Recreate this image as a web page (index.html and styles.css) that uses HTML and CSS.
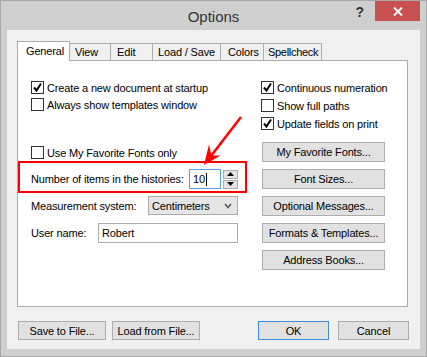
FILE: index.html
```html
<!DOCTYPE html>
<html lang="en">

<head>
    <meta charset="UTF-8">
    <meta name="viewport" content="width=device-width, initial-scale=1.0">
    <title>Options</title>
    <link rel="stylesheet" href="styles.css">
</head>

<body>
    <div class="window">
        <div class="titlebar">
            <span class="title">Options</span>
            <div class="controls">
                <span class="help">?</span>
                <span class="close">
                    <svg width="10" height="9" viewBox="0 0 10 9">
                        <path d="M1 0.5 L9 8.5 M9 0.5 L1 8.5" stroke="#fff" stroke-width="2" />
                    </svg>
                </span>
            </div>
        </div>

        <div class="client">
            <div class="tabs">
                <span class="tab active tab-general">General</span>
                <span class="tab tab-view">View</span>
                <span class="tab tab-edit">Edit</span>
                <span class="tab tab-load">Load / Save</span>
                <span class="tab tab-colors">Colors</span>
                <span class="tab tab-spell">Spellcheck</span>
            </div>

            <div class="panel">
                <div class="col left-col">
                    <label class="check">
                        <span class="box"><svg width="11" height="11" viewBox="0 0 11 11"><path d="M2 5.5 L4.5 8.5 L9 1.5" fill="none" stroke="#000" stroke-width="2" /></svg></span>
                        Create a new document at startup
                    </label>
                    <label class="check">
                        <span class="box"></span>
                        Always show templates window
                    </label>
                    <label class="check fav-row">
                        <span class="box"></span>
                        Use My Favorite Fonts only
                    </label>

                    <div class="field-row highlight">
                        <span>Number of items in the histories:</span>
                        <div class="spin-group">
                            <span class="num-input">10<span class="caret"></span></span>
                            <span class="spinner">
                                <span class="spin-btn"><svg width="7" height="4" viewBox="0 0 7 4"><path d="M0 4 L3.5 0 L7 4 Z" fill="#000" /></svg></span>
                                <span class="spin-btn"><svg width="7" height="4" viewBox="0 0 7 4"><path d="M0 0 L7 0 L3.5 4 Z" fill="#000" /></svg></span>
                            </span>
                        </div>
                    </div>

                    <div class="field-row measure-row">
                        <span>Measurement system:</span>
                        <span class="select">
                            Centimeters
                            <svg width="8" height="6" viewBox="0 0 8 6"><path d="M1 1 L4 4.5 L7 1" fill="none" stroke="#555" stroke-width="1.6" /></svg>
                        </span>
                    </div>

                    <div class="field-row user-row">
                        <span>User name:</span>
                        <span class="text-input">Robert</span>
                    </div>
                </div>

                <div class="col right-col">
                    <label class="check">
                        <span class="box"><svg width="11" height="11" viewBox="0 0 11 11"><path d="M2 5.5 L4.5 8.5 L9 1.5" fill="none" stroke="#000" stroke-width="2" /></svg></span>
                        Continuous numeration
                    </label>
                    <label class="check">
                        <span class="box"></span>
                        Show full paths
                    </label>
                    <label class="check">
                        <span class="box"><svg width="11" height="11" viewBox="0 0 11 11"><path d="M2 5.5 L4.5 8.5 L9 1.5" fill="none" stroke="#000" stroke-width="2" /></svg></span>
                        Update fields on print
                    </label>

                    <div class="side-buttons">
                        <button class="btn">My Favorite Fonts...</button>
                        <button class="btn">Font Sizes...</button>
                        <button class="btn">Optional Messages...</button>
                        <button class="btn">Formats &amp; Templates...</button>
                        <button class="btn">Address Books...</button>
                    </div>
                </div>

                <svg class="arrow" width="50" height="60" viewBox="0 0 50 60">
                    <path d="M43 4 L13 43" stroke="#f00" stroke-width="2.5" fill="none" />
                    <path d="M6 52 L22.5 42.5 L13.5 42.5 L11 31.5 Z" fill="#f00" />
                </svg>
            </div>

            <div class="footer">
                <div class="btn-group">
                    <button class="btn">Save to File...</button>
                    <button class="btn">Load from File...</button>
                </div>
                <div class="btn-group right">
                    <button class="btn default">OK</button>
                    <button class="btn">Cancel</button>
                </div>
            </div>
        </div>
    </div>
</body>

</html>
```

FILE: styles.css
```css
body {
    margin: 0;
    font-family: "Segoe UI", "Liberation Sans", Arial, sans-serif;
    font-size: 11px;
    letter-spacing: -0.15px;
    color: #000;
    background-color: #cdcdcd;
}

.window {
    width: 427px;
    height: 357px;
    box-sizing: border-box;
    border: 1px solid #a8a8a8;
    background-color: #cfcfcf;
    display: flex;
    flex-direction: column;
}

/* title bar */
.titlebar {
    height: 29px;
    position: relative;
    display: flex;
    align-items: center;
    justify-content: center;
}

.title {
    font-size: 15px;
    letter-spacing: 0;
    color: #333;
    margin-top: 1px;
}

.controls {
    position: absolute;
    top: 0;
    right: 6px;
    display: flex;
    align-items: flex-start;
}

.help {
    font-size: 14px;
    font-weight: bold;
    color: #333;
    margin: 3px 11px 0 0;
}

.close {
    width: 45px;
    height: 20px;
    background-color: #c75050;
    display: flex;
    align-items: center;
    justify-content: center;
}

/* client area */
.client {
    flex: 1;
    margin: 0 6px 7px;
    background-color: #f0f0f0;
    padding: 11px 10px 0;
    display: flex;
    flex-direction: column;
}

.tabs {
    display: flex;
    align-items: flex-end;
    height: 19px;
}

.tab {
    box-sizing: border-box;
    height: 17px;
    padding-left: 6px;
    margin-right: -1px;
    border: 1px solid #acacac;
    border-bottom: none;
    background-color: #f0f0f0;
    line-height: 16px;
    white-space: nowrap;
}

.tab.active {
    position: relative;
    z-index: 1;
    height: 20px;
    margin-bottom: -1px;
    padding-left: 8px;
    background-color: #fff;
    line-height: 18px;
}

.tab-general { width: 53px; }
.tab-view { width: 42px; padding-left: 5px; }
.tab-edit { width: 43px; }
.tab-load { width: 69px; padding-left: 5px; }
.tab-colors { width: 44px; padding-left: 7px; }
.tab-spell { width: 59px; padding-left: 4px; letter-spacing: -0.3px; }

.panel {
    position: relative;
    box-sizing: border-box;
    width: 391px;
    height: 247px;
    border: 1px solid #acacac;
    background-color: #fff;
    padding: 18px 0 0 13px;
    display: flex;
    gap: 23px;
}

.col {
    display: flex;
    flex-direction: column;
}

.left-col {
    width: 207px;
}

.check {
    display: flex;
    align-items: center;
    height: 17px;
    white-space: nowrap;
}

.right-col .check {
    margin-bottom: 1px;
}

.box {
    box-sizing: border-box;
    width: 13px;
    height: 13px;
    border: 1px solid #333;
    background-color: #fff;
    margin-right: 3px;
    display: flex;
    align-items: center;
    justify-content: center;
}

.fav-row {
    margin-top: 31px;
}

.field-row {
    display: flex;
    align-items: center;
    white-space: nowrap;
}

.highlight {
    box-sizing: border-box;
    height: 32px;
    margin: 0 -9px 0 -13px;
    padding: 4px 7px 0 11px;
    border: 2px solid #f00;
}

.spin-group {
    margin-left: auto;
    display: flex;
    align-items: center;
    gap: 2px;
}

.num-input {
    box-sizing: border-box;
    width: 32px;
    height: 20px;
    border: 1px solid #569de5;
    background-color: #fff;
    padding-left: 3px;
    display: flex;
    align-items: center;
}

.caret {
    display: inline-block;
    width: 1px;
    height: 13px;
    margin-left: 1px;
    background-color: #000;
}

.spinner {
    display: flex;
    flex-direction: column;
    gap: 1px;
}

.spin-btn {
    box-sizing: border-box;
    width: 15px;
    height: 9px;
    border: 1px solid #acacac;
    background-color: #e5e5e5;
    display: flex;
    align-items: center;
    justify-content: center;
}

.measure-row {
    margin-top: 3px;
}

.select {
    box-sizing: border-box;
    margin-left: auto;
    width: 90px;
    height: 19px;
    border: 1px solid #acacac;
    background-color: #e5e5e5;
    padding: 0 5px 0 3px;
    display: flex;
    align-items: center;
    justify-content: space-between;
}

.user-row {
    margin-top: 8px;
}

.text-input {
    box-sizing: border-box;
    margin-left: auto;
    width: 140px;
    height: 20px;
    border: 1px solid #acacac;
    background-color: #fff;
    padding-left: 3px;
    display: flex;
    align-items: center;
}

.side-buttons {
    margin-top: 9px;
    margin-left: 1px;
    display: flex;
    flex-direction: column;
    gap: 7px;
}

.btn {
    box-sizing: border-box;
    height: 20px;
    padding: 0;
    border: 1px solid #adadad;
    background-color: #e1e1e1;
    font-family: inherit;
    font-size: 11px;
    letter-spacing: inherit;
    color: #000;
}

.side-buttons .btn {
    width: 123px;
}

.arrow {
    position: absolute;
    left: 180px;
    top: 52px;
}

/* bottom buttons */
.footer {
    margin: 14px 1px 0;
    display: flex;
    justify-content: space-between;
}

.btn-group {
    display: flex;
    gap: 6px;
}

.btn-group.right {
    gap: 9px;
}

.footer .btn {
    width: 88px;
    height: 19px;
}

.footer .right .btn {
    width: 71px;
}

.btn.default {
    border-color: #3c8fe0;
}
```
